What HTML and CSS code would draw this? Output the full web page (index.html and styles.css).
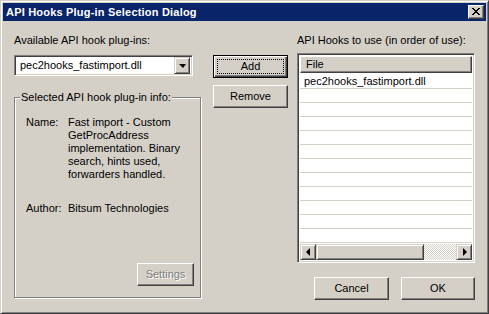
FILE: index.html
```html
<!DOCTYPE html>
<html lang="en">
<head>
    <meta charset="UTF-8">
    <meta name="viewport" content="width=device-width, initial-scale=1.0">
    <title>API Hooks Plug-in Selection Dialog</title>
    <link rel="stylesheet" href="styles.css">
</head>
<body>
    <div class="window">
        <div class="titlebar">
            <span class="title">API Hooks Plug-in Selection Dialog</span>
            <span class="close-btn">
                <svg width="8" height="7" viewBox="0 0 8 7" shape-rendering="crispEdges">
                    <path fill="#000" d="M0 0h2v1h-2zM6 0h2v1h-2zM1 1h2v1h-2zM5 1h2v1h-2zM2 2h4v1h-4zM3 3h2v1h-2zM2 4h4v1h-4zM1 5h2v1h-2zM5 5h2v1h-2zM0 6h2v1h-2zM6 6h2v1h-2z"/>
                </svg>
            </span>
        </div>

        <div class="client">
            <div class="col-left">
                <div class="label">Available API hook plug-ins:</div>
                <div class="combo">
                    <span class="combo-text">pec2hooks_fastimport.dll</span>
                    <span class="combo-btn"><span class="arrow-down"></span></span>
                </div>

                <div class="group">
                    <span class="group-title">Selected API hook plug-in info:</span>
                    <div class="info-row">
                        <span class="info-key">Name:</span>
                        <span class="info-val">Fast import - Custom GetProcAddress implementation. Binary search, hints used, forwarders handled.</span>
                    </div>
                    <div class="info-row author">
                        <span class="info-key">Author:</span>
                        <span class="info-val">Bitsum Technologies</span>
                    </div>
                    <div class="group-actions">
                        <button class="btn btn-settings" disabled>Settings</button>
                    </div>
                </div>
            </div>

            <div class="col-mid">
                <button class="btn btn-default">Add</button>
                <button class="btn">Remove</button>
            </div>

            <div class="col-right">
                <div class="label">API Hooks to use (in order of use):</div>
                <div class="listview">
                    <div class="lv-header"><span class="lv-col">File</span></div>
                    <div class="lv-rows">
                        <div class="lv-row">pec2hooks_fastimport.dll</div>
                        <div class="lv-row"></div>
                        <div class="lv-row"></div>
                        <div class="lv-row"></div>
                        <div class="lv-row"></div>
                        <div class="lv-row"></div>
                        <div class="lv-row"></div>
                        <div class="lv-row"></div>
                        <div class="lv-row"></div>
                        <div class="lv-row"></div>
                        <div class="lv-row"></div>
                        <div class="lv-row"></div>
                        <div class="lv-row"></div>
                    </div>
                    <div class="hscroll">
                        <span class="sb-btn"><span class="arrow-left"></span></span>
                        <span class="sb-thumb"></span>
                        <span class="sb-track"></span>
                        <span class="sb-btn"><span class="arrow-right"></span></span>
                    </div>
                </div>
                <div class="dialog-actions">
                    <button class="btn btn-cancel">Cancel</button>
                    <button class="btn btn-ok">OK</button>
                </div>
            </div>
        </div>
    </div>
</body>
</html>
```

FILE: styles.css
```css
:root {
    --face: #d4d0c8;
    --shadow: #808080;
    --dark: #404040;
    --light: #ffffff;
    --caption: #0a246a;
}

* {
    margin: 0;
    padding: 0;
    box-sizing: border-box;
}

body {
    font-family: 'Liberation Sans', Arial, sans-serif;
    font-size: 11px;
    line-height: 13px;
    color: #000;
    background: var(--face);
}

.window {
    width: 489px;
    height: 314px;
    background: var(--face);
    border: 1px solid;
    border-color: var(--face) var(--dark) var(--dark) var(--face);
    box-shadow: inset 1px 1px var(--light), inset -1px -1px var(--shadow);
    padding: 2px;
    display: flex;
    flex-direction: column;
}

/* caption */
.titlebar {
    height: 18px;
    background: var(--caption);
    display: flex;
    align-items: center;
    padding: 0 2px 0 3px;
}

.title {
    flex: 1;
    color: #fff;
    font-weight: bold;
    letter-spacing: 0.2px;
}

.close-btn {
    width: 16px;
    height: 14px;
    background: var(--face);
    border: 1px solid;
    border-color: var(--light) var(--dark) var(--dark) var(--light);
    box-shadow: inset -1px -1px var(--shadow);
    display: flex;
    align-items: center;
    justify-content: center;
    padding: 0 1px 1px 0;
}

.close-btn svg {
    display: block;
}

/* client area */
.client {
    flex: 1;
    display: flex;
    padding: 13px 11px 0 11px;
}

.label {
    height: 13px;
    white-space: nowrap;
}

.col-left {
    width: 188px;
}

.col-mid {
    width: 75px;
    margin-left: 11px;
    padding-top: 21px;
    display: flex;
    flex-direction: column;
    gap: 7px;
}

.col-right {
    width: 178px;
    margin-left: 9px;
}

/* combo box */
.combo {
    width: 179px;
    height: 21px;
    margin-top: 8px;
    background: #fff;
    border: 1px solid;
    border-color: var(--shadow) var(--light) var(--light) var(--shadow);
    box-shadow: inset 1px 1px var(--dark), inset -1px -1px var(--face);
    display: flex;
    align-items: center;
    padding: 2px;
}

.combo-text {
    flex: 1;
    padding-left: 3px;
    white-space: nowrap;
}

.combo-btn {
    width: 16px;
    height: 17px;
    background: var(--face);
    border: 1px solid;
    border-color: var(--face) var(--dark) var(--dark) var(--face);
    box-shadow: inset 1px 1px var(--light), inset -1px -1px var(--shadow);
    display: flex;
    align-items: center;
    justify-content: center;
}

.arrow-down {
    width: 0;
    height: 0;
    border-left: 4px solid transparent;
    border-right: 3px solid transparent;
    border-top: 4px solid #000;
    margin-top: 1px;
}

/* group box */
.group {
    position: relative;
    width: 187px;
    height: 201px;
    margin-top: 21px;
    border: 1px solid var(--shadow);
    box-shadow: inset 1px 1px var(--light), 1px 1px var(--light);
    padding: 18px 6px 11px 11px;
    display: flex;
    flex-direction: column;
}

.group-title {
    position: absolute;
    top: -7px;
    left: 5px;
    padding: 0 1px;
    background: var(--face);
    white-space: nowrap;
}

.info-row {
    display: flex;
}

.info-key {
    width: 42px;
    flex-shrink: 0;
}

.info-val {
    width: 122px;
}

.author {
    margin-top: 21px;
}

.group-actions {
    margin-top: auto;
    display: flex;
    justify-content: flex-end;
}

/* push buttons */
.btn {
    position: relative;
    height: 23px;
    font: inherit;
    color: #000;
    background: var(--face);
    border: 1px solid;
    border-color: var(--light) var(--dark) var(--dark) var(--light);
    box-shadow: inset -1px -1px var(--shadow);
    padding-bottom: 1px;
}

.btn-default {
    border-color: #000;
    box-shadow: inset 1px 1px var(--light), inset -1px -1px var(--dark), inset -2px -2px var(--shadow);
}

.btn-default::after {
    content: '';
    position: absolute;
    inset: 3px;
    border: 1px dotted #000;
}

.btn-settings {
    width: 57px;
    color: var(--shadow);
    text-shadow: 1px 1px var(--light);
}

.btn-cancel {
    width: 75px;
}

.btn-ok {
    width: 74px;
}

/* list view */
.listview {
    height: 210px;
    margin-top: 6px;
    background: #fff;
    border: 1px solid;
    border-color: var(--shadow) var(--light) var(--light) var(--shadow);
    box-shadow: inset 1px 1px var(--dark), inset -1px -1px var(--face);
    padding: 2px;
    display: flex;
    flex-direction: column;
}

.lv-header {
    height: 17px;
    flex-shrink: 0;
    display: flex;
}

.lv-col {
    flex: 1;
    background: var(--face);
    border: 1px solid;
    border-color: var(--light) var(--dark) var(--dark) var(--light);
    box-shadow: inset -1px -1px var(--shadow);
    padding: 1px 0 0 5px;
}

.lv-rows {
    flex: 1;
    overflow: hidden;
    padding-top: 2px;
}

.lv-row {
    height: 14px;
    border-bottom: 1px solid var(--face);
    padding-left: 4px;
    white-space: nowrap;
}

/* horizontal scroll bar */
.hscroll {
    height: 16px;
    flex-shrink: 0;
    display: flex;
    background: var(--face);
}

.sb-btn,
.sb-thumb {
    background: var(--face);
    border: 1px solid;
    border-color: var(--face) var(--dark) var(--dark) var(--face);
    box-shadow: inset 1px 1px var(--light), inset -1px -1px var(--shadow);
}

.sb-btn {
    width: 16px;
    display: flex;
    align-items: center;
    justify-content: center;
}

.sb-thumb {
    width: 108px;
}

.sb-track {
    flex: 1;
    background: repeating-conic-gradient(var(--light) 0 25%, var(--face) 0 50%) 0 0 / 2px 2px;
}

.arrow-left,
.arrow-right {
    width: 0;
    height: 0;
    border-top: 4px solid transparent;
    border-bottom: 4px solid transparent;
}

.arrow-left {
    border-right: 4px solid #000;
    margin-right: 1px;
}

.arrow-right {
    border-left: 4px solid #000;
    margin-left: 1px;
}

.dialog-actions {
    margin-top: 14px;
    display: flex;
    justify-content: flex-end;
    gap: 12px;
}
```
